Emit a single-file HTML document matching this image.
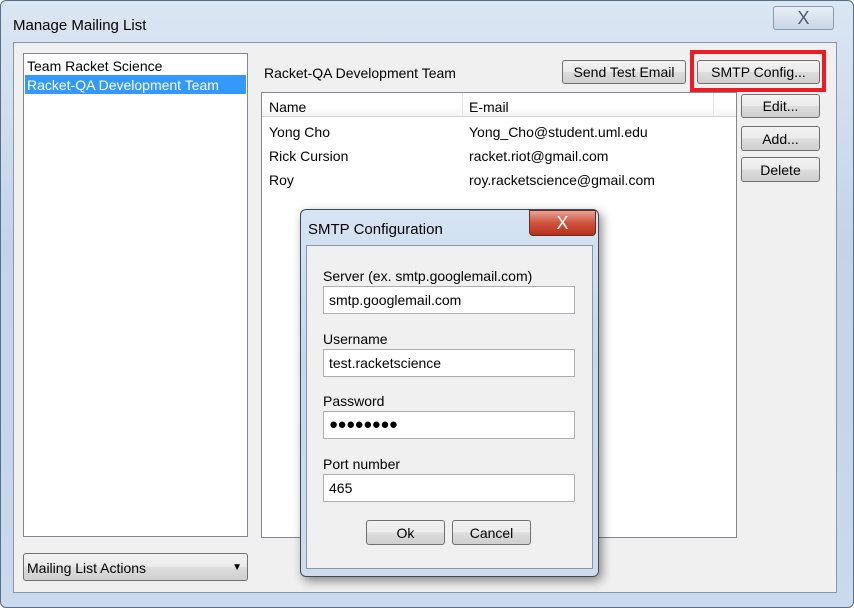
<!DOCTYPE html>
<html><head><style>
*{box-sizing:border-box;margin:0;padding:0}
body{width:854px;height:608px;overflow:hidden;background:#fff;font-family:"Liberation Sans",sans-serif;font-size:14px;color:#000;position:relative}
.a{position:absolute}
.btn{position:absolute;border:1px solid #707070;border-radius:3px;background:linear-gradient(#f2f2f2 0%,#ebebeb 50%,#dddddd 51%,#cfcfcf 100%);text-align:center;font-size:14px;line-height:22px}
.in{position:absolute;background:#fff;border:1px solid #abadb3;padding-left:5px;line-height:26px;font-size:14px}
.lbl{position:absolute;font-size:14px}
</style></head><body>
<div class="a" style="left:0;top:0;width:854px;height:608px;border:1px solid #5a6e88;border-radius:6px;background:linear-gradient(#dbe6f3,#c3d4e9 40%,#cad9ec)"></div>
<div class="a" style="left:13px;top:17px;font-size:15px">Manage Mailing List</div>
<div class="a" style="left:773px;top:6px;width:61px;height:24px;border:1px solid #8a9ab0;border-radius:3px;background:linear-gradient(#e8eef6,#c9d6e6);text-align:center;font-size:18px;line-height:22px;color:#4a5a70">X</div>
<div class="a" style="left:13px;top:42px;width:824px;height:551px;background:#f0f0f0;border:1px solid #8796ab"></div>
<div class="a" style="left:23px;top:53px;width:225px;height:484px;background:#fff;border:1px solid #828790"></div>
<div class="a" style="left:27px;top:58px;font-size:14px">Team Racket Science</div>
<div class="a" style="left:25px;top:75px;width:221px;height:19px;background:#3399ff;color:#fff;padding-left:2px;line-height:20px">Racket-QA Development Team</div>
<div class="a" style="left:264px;top:65px">Racket-QA Development Team</div>
<div class="btn" style="left:562px;top:60px;width:124px;height:24px">Send Test Email</div>
<div class="a" style="left:690px;top:50px;width:136px;height:42px;border:4px solid #ed1c24"></div>
<div class="btn" style="left:697px;top:60px;width:123px;height:24px">SMTP Config...</div>
<div class="a" style="left:261px;top:92px;width:476px;height:446px;background:#fff;border:1px solid #828790"></div>
<div class="a" style="left:262px;top:93px;width:474px;height:24px;background:linear-gradient(#fff,#fff 60%,#f3f3f3);border-bottom:1px solid #d5d5d5"></div>
<div class="a" style="left:462px;top:93px;width:1px;height:24px;background:#e3e3e3"></div>
<div class="a" style="left:713px;top:93px;width:1px;height:24px;background:#e3e3e3"></div>
<div class="a" style="left:269px;top:99px">Name</div>
<div class="a" style="left:469px;top:99px">E-mail</div>
<div class="a" style="left:269px;top:124px">Yong Cho</div>
<div class="a" style="left:469px;top:124px">Yong_Cho@student.uml.edu</div>
<div class="a" style="left:269px;top:148px">Rick Cursion</div>
<div class="a" style="left:469px;top:148px">racket.riot@gmail.com</div>
<div class="a" style="left:269px;top:172px">Roy</div>
<div class="a" style="left:469px;top:172px">roy.racketscience@gmail.com</div>
<div class="btn" style="left:741px;top:94px;width:79px;height:24px">Edit...</div>
<div class="btn" style="left:741px;top:126px;width:79px;height:25px;line-height:24px">Add...</div>
<div class="btn" style="left:741px;top:157px;width:79px;height:25px;line-height:24px">Delete</div>
<div class="btn" style="left:23px;top:553px;width:225px;height:28px;text-align:left;padding-left:3px;line-height:28px">Mailing List Actions<span style="position:absolute;right:5px;top:0;font-size:10px">&#9660;</span></div>

<div class="a" style="left:300px;top:209px;width:299px;height:368px;border:1px solid #3d4a5a;border-radius:6px;background:linear-gradient(#d6e4f4,#c5d7ec 40%,#cfdcec);box-shadow:3px 4px 10px rgba(0,0,0,.45)"></div>
<div class="a" style="left:308px;top:221px;font-size:15px">SMTP Configuration</div>
<div class="a" style="left:529px;top:210px;width:67px;height:26px;border:1px solid #6b2a20;border-radius:0 0 4px 4px;background:linear-gradient(#e8a395,#d0533e 50%,#b8301c);color:#fff;text-align:center;font-size:18px;line-height:24px">X</div>
<div class="a" style="left:306px;top:245px;width:287px;height:324px;background:#f0f0f0;border:1px solid #8796ab"></div>
<div class="lbl" style="left:323px;top:268px">Server (ex. smtp.googlemail.com)</div>
<div class="in" style="left:323px;top:286px;width:252px;height:28px">smtp.googlemail.com</div>
<div class="lbl" style="left:323px;top:331px">Username</div>
<div class="in" style="left:323px;top:349px;width:252px;height:28px">test.racketscience</div>
<div class="lbl" style="left:323px;top:393px">Password</div>
<div class="in" style="left:323px;top:411px;width:252px;height:28px;font-size:15px;letter-spacing:-0.5px">●●●●●●●●</div>
<div class="lbl" style="left:323px;top:456px">Port number</div>
<div class="in" style="left:323px;top:474px;width:252px;height:28px">465</div>
<div class="btn" style="left:366px;top:520px;width:79px;height:25px;line-height:24px">Ok</div>
<div class="btn" style="left:452px;top:520px;width:79px;height:25px;line-height:24px">Cancel</div>
</body></html>
